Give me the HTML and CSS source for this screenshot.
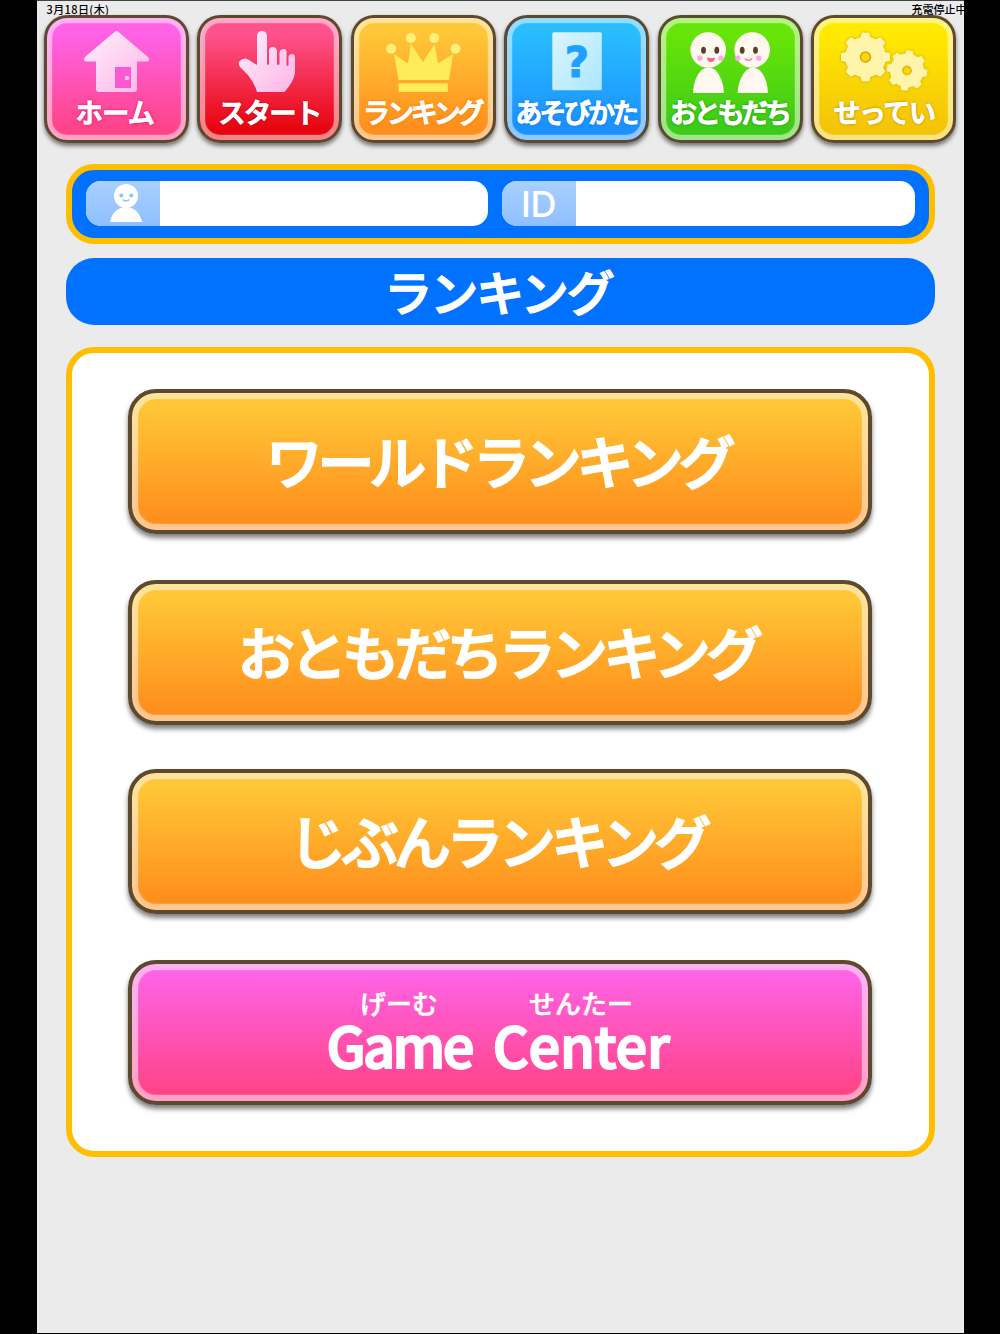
FILE: index.html
```html
<!DOCTYPE html>
<html lang="ja">
<head>
  <meta charset="UTF-8" />
  <title>ランキング</title>
  <link rel="stylesheet" href="styles.css">
</head>
<body>
  <div class="app">
    <div class="status">
      <span>3月18日(木)</span>
      <span class="charge">充電停止中</span>
    </div>

    <nav class="menu">
      <a class="tab home">
        <svg viewBox="56 28 120 68">
          <defs>
            <linearGradient id="pinkIcon" x1="0" y1="0" x2="1" y2="1">
              <stop offset="0" stop-color="#fff0fc" />
              <stop offset="1" stop-color="#ffb5e6" />
            </linearGradient>
          </defs>
          <path fill="url(#pinkIcon)" d="M114.5 32Q116.500 30 118.500 32L148 57Q150.500 61 147 61.500H137V89Q137 92 134 92H99Q96 92 96 89V61.500H86Q82.500 61 85 57Z" />
          <path fill="#fb58d2" d="M115 67h16v21h-16z" />
          <circle cx="127" cy="78" r="2.200" fill="#ffc9f0" />
        </svg>
        <span class="t3">ホーム</span>
      </a>
      <a class="tab start">
        <svg viewBox="210 28 120 68">
          <path fill="url(#pinkIcon)" d="M257 65V36Q257.500 31 262 31T267 36V64Q268 66 269 64V50Q269.500 47 273 47T277 51V64Q278.500 66 279.500 64V53Q280 49 283.500 49T286.500 53V65Q287.500 67 288.500 65V57Q289 54 292 54T295 58V73Q294 81 284.500 92H257Q255 84 248 75L240 67Q237 62 241 60Q245 57 249 60Z" />
        </svg>
        <span class="t4">スタート</span>
      </a>
      <a class="tab rank">
        <svg viewBox="363.500 28 120 68">
          <g fill="#fff07a">
            <circle cx="391.700" cy="48.700" r="5" />
            <circle cx="411.300" cy="38" r="5" />
            <circle cx="434.700" cy="38" r="5" />
            <circle cx="456" cy="48.700" r="5" />
          </g>
          <g fill="#ffec58">
            <path d="M394.500 54L408.500 63.500L411.500 44L423.500 62L435 44L438.500 63.500L453.500 54L449.500 80H399Z" />
            <path d="M399 83.300h49.300v8.700H399z" />
          </g>
        </svg>
        <span class="t5">ランキング</span>
      </a>
      <a class="tab howto">
        <svg viewBox="517 28 120 68">
          <defs>
            <linearGradient id="paper" x1="0" y1="0" x2="1" y2="1">
              <stop offset="0" stop-color="#dcf5ff" />
              <stop offset="1" stop-color="#abe6ff" />
            </linearGradient>
          </defs>
          <rect x="552.300" y="32.300" width="49.500" height="58" rx="1.500" fill="url(#paper)" />
          <text class="question" x="577" y="77">?</text>
        </svg>
        <span class="t5 wide">あそびかた</span>
      </a>
      <a class="tab friends">
        <svg viewBox="670.500 28 120 68">
          <g fill="#fff8f1">
            <path d="M693.500 93Q694 78 702 70Q709 65 716 70Q723.500 78 724.500 93Z" />
            <path d="M738 93Q739 78 747 70Q753 65 760 70Q768 78 768.500 93Z" />
            <circle cx="708.700" cy="50" r="17.800" />
            <circle cx="752.700" cy="50" r="17.800" />
          </g>
          <g fill="#5b3d25">
            <ellipse cx="704" cy="50.300" rx="2.400" ry="3.500" />
            <ellipse cx="717.300" cy="50.300" rx="2.400" ry="3.500" />
            <ellipse cx="742.700" cy="50.300" rx="2.400" ry="3.500" />
            <ellipse cx="756" cy="50.300" rx="2.400" ry="3.500" />
          </g>
          <g fill="#ffa8e6">
            <circle cx="700.300" cy="58.300" r="2.700" />
            <circle cx="721.500" cy="58.300" r="2.700" />
            <circle cx="738.300" cy="58.300" r="2.700" />
            <circle cx="759.300" cy="58.300" r="2.700" />
          </g>
          <path fill="#ff5a8d" d="M707.500 57.500Q711.500 59 715.500 57.500Q715 62 711.500 62T707.500 57.500Z" />
          <path fill="none" stroke="#ff7098" stroke-width="1.200" d="M745.500 58.500Q749 62.500 752.500 58.500" />
        </svg>
        <span class="t5">おともだち</span>
      </a>
      <a class="tab config">
        <svg viewBox="824 28 120 68">
          <defs>
            <g id="gear">
              <circle r="20.500" />
              <path id="teeth" d="M-5 -20L-3.800 -24.500H3.800L5 -20V20L3.800 24.500H-3.800L-5 20Z" />
              <use href="#teeth" transform="rotate(45)" />
              <use href="#teeth" transform="rotate(90)" />
              <use href="#teeth" transform="rotate(135)" />
              <circle class="hole" r="5" />
            </g>
          </defs>
          <use class="gear" href="#gear" transform="translate(865.500 57)" />
          <use class="gear" href="#gear" transform="translate(907 70.500) rotate(8) scale(.83)" />
        </svg>
        <span class="t4">せってい</span>
      </a>
    </nav>

    <div class="profile">
      <div class="field name">
        <div class="label">
          <svg viewBox="0 0 40 42">
            <circle cx="20" cy="14" r="12" />
            <path d="M4 40Q7 26 20 25Q33 26 36 40Z" />
            <g class="face">
              <circle cx="15.300" cy="13.500" r="2" />
              <circle cx="25.300" cy="13.500" r="2" />
              <path d="M16.500 17.500Q20 20.500 23.500 17.500" />
            </g>
          </svg>
        </div>
      </div>
      <div class="field id">
        <div class="label">ID</div>
      </div>
    </div>

    <h1 class="title">ランキング</h1>

    <main class="panel">
      <a class="button world">ワールドランキング</a>
      <a class="button friend">おともだちランキング</a>
      <a class="button self">じぶんランキング</a>
      <a class="button gamecenter">
        <span class="word"><small>げーむ</small>Game</span>
        <span class="word center"><small>せんたー</small>Center</span>
      </a>
    </main>
  </div>
</body>
</html>
```
FILE: styles.css
```css
* { box-sizing: border-box; }
body { margin: 0; background: #000; font-family: "Noto Sans CJK JP", sans-serif; }
.app {
  width: 927px; height: 1333px; margin: 0 auto; padding: 0 7px;
  background: #ebebeb; border-top: 1px solid #444; overflow: hidden;
}

.status {
  display: flex; justify-content: space-between;
  height: 14px; margin-right: -9px; padding: 1px 0 0 3px;
  font-size: 11px; font-weight: 500; line-height: 15px; color: #000; white-space: nowrap;
  letter-spacing: .4px;
}
.status .charge { letter-spacing: 0; margin-right: -1px; }

.menu { display: flex; justify-content: space-between; }
.tab, .button {
  border: 3px solid #5c4a30; color: #fff; font-weight: 500; white-space: nowrap;
  background-origin: border-box;
}
.tab {
  display: flex; flex-direction: column; align-items: center;
  width: 145px; height: 128px; padding-top: 10px; border-radius: 23px;
  box-shadow: inset 0 0 0 5px rgba(255,255,255,.45), inset 0 0 0 6px rgba(255,255,255,.1), 0 3px 4px rgba(0,0,0,.5);
}
.tab svg { width: 120px; height: 68px; flex: none; }
.tab span { font-size: 27px; line-height: 32px; -webkit-text-stroke: 1.300px #fff; }
.tab .t3 { letter-spacing: -.5px; margin-right: 2px; }
.tab .t4 { letter-spacing: -1.400px; }
.tab .t5 { letter-spacing: -3.200px; margin-right: 2px; }
.tab .wide { letter-spacing: -2.800px; }

.home { background-image: linear-gradient(#ff62e6 15%, #ff4489 88%); text-shadow: 0 0 3px #e0006c, 0 0 3px #e0006c; }
.start { background-image: linear-gradient(#ff528c 15%, #e7060f 88%); text-shadow: 0 0 3px #b90018, 0 0 3px #b90018; }
.rank { background-image: linear-gradient(#ffc637 15%, #ff8f1d 88%); text-shadow: 0 0 3px #f57200, 0 0 3px #f57200; }
.howto { background-image: linear-gradient(#29bcff 15%, #1b91ff 88%); text-shadow: 0 0 3px #0074ed, 0 0 3px #0074ed; }
.friends { background-image: linear-gradient(#68e508 15%, #3eca18 88%); text-shadow: 0 0 3px #16990c, 0 0 3px #16990c; }
.config { background-image: linear-gradient(#ffe900 15%, #f4c408 88%); text-shadow: 0 0 3px #c58500, 0 0 3px #c58500; }
.question { font: bold 42px "DejaVu Sans", sans-serif; text-anchor: middle; fill: #219fff; stroke: #219fff; stroke-width: 1px; text-shadow: none; }
.gear { fill: #fff5aa; filter: drop-shadow(0 0 1px #c98f00); }
.hole { fill: #fdd803; stroke: #d9a300; stroke-width: 1.500; }

.profile {
  display: flex; gap: 14px; width: 869px; height: 80px; margin: 21px auto 0; padding: 11px 14px;
  border: 6px solid #ffbf00; border-radius: 28px; background: #0072ff;
}
.field { height: 45px; border-radius: 15px; background: #fff; overflow: hidden; }
.name { width: 402px; }
.id { width: 413px; }
.label {
  display: flex; align-items: center; justify-content: center;
  width: 74px; height: 45px; background: linear-gradient(#a9d0ff, #8fc0ff);
  color: #fff; font: 500 36px Inter, sans-serif; letter-spacing: -.5px;
}
.label svg { width: 40px; height: 42px; margin: 0 0 2px 7px; fill: #fff; }
.label .face { fill: #8fc0ff; }
.face path { fill: none; stroke: #8fc0ff; stroke-width: 1.500; }

.title {
  width: 869px; height: 67px; margin: 14px auto 0; border-radius: 28px; background: #0072ff;
  color: #fff; font-size: 48px; font-weight: 500; line-height: 65px; letter-spacing: -2px;
  text-align: center; text-indent: -3px; -webkit-text-stroke: 1.500px #fff;
}

.panel {
  display: flex; flex-direction: column; align-items: center; gap: 45px;
  width: 869px; height: 810px; margin: 22px auto 0; padding-top: 36px;
  border: 6px solid #ffbf00; border-radius: 28px; background: #fff;
}
.button {
  display: flex; justify-content: center; flex: none;
  width: 744px; height: 145px; padding-right: 4px; border-width: 4px; border-radius: 28px;
  background-image: linear-gradient(#ffc637 12%, #ff8f1d 90%);
  box-shadow: inset 0 0 0 6px rgba(255,255,255,.45), inset 0 0 0 7px rgba(255,255,255,.1), 0 4px 5px rgba(0,0,0,.5);
  font-size: 57px; line-height: 133px; letter-spacing: -5.200px; -webkit-text-stroke: 2px #fff;
}
.friend { margin-top: 1px; letter-spacing: -4.800px; }
.self { margin-top: -1px; letter-spacing: -4.600px; }
.gamecenter {
  gap: 21px; margin-top: 1px; padding: 24px 4px 0 0; background-image: linear-gradient(#ff62e2 12%, #ff4489 90%);
  font-size: 56px; line-height: 51px; letter-spacing: -2.700px;
}
.word { display: flex; flex-direction: column; align-items: center; }
.word small { font-size: 26px; line-height: 30px; letter-spacing: 0; -webkit-text-stroke: .5px #fff; }
.center { letter-spacing: -.300px; }
```
